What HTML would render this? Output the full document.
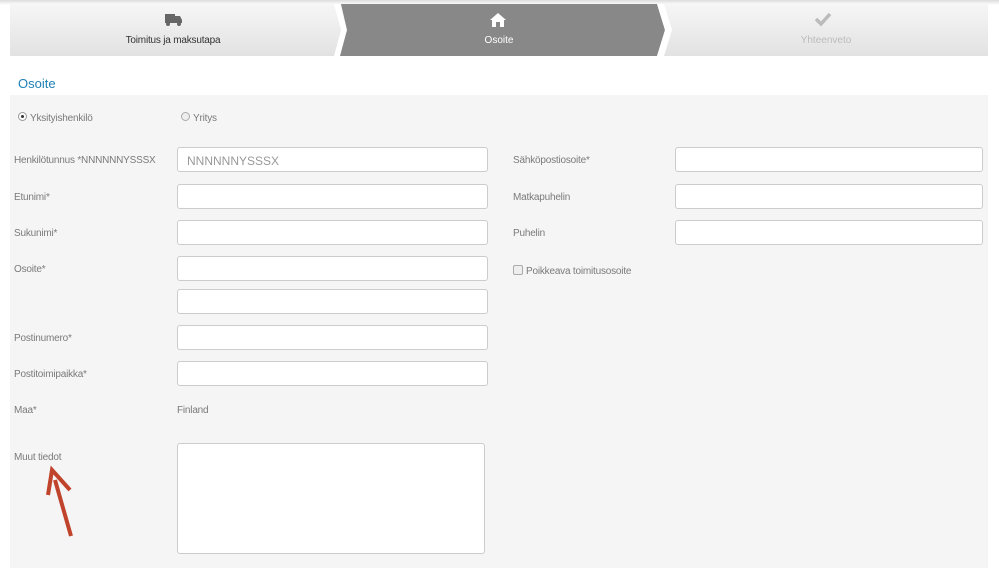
<!DOCTYPE html>
<html><head><meta charset="utf-8"><style>
body{margin:0;width:999px;height:570px;background:#fff;font-family:"Liberation Sans",sans-serif;position:relative;overflow:hidden}
.a{position:absolute}
.lbl{position:absolute;font-size:10px;color:#7a7a7a;letter-spacing:-0.2px}
.in{position:absolute;background:#fff;border:1px solid #ccc;border-radius:3px;box-sizing:border-box;height:25px}
</style></head><body>
<div class="a" style="left:0;top:0;width:999px;height:5px;background:linear-gradient(#ddd,#fff)"></div>
<div class="a" style="left:10px;top:4px;width:978px;height:52px;background:linear-gradient(#f6f6f6,#e2e2e2)"></div>
<svg class="a" style="left:0;top:0" width="999" height="60">
<polygon points="334,4 340,4 347,30 340,56 334,56 341,30" fill="#fff"/>
<polygon points="341,4 657,4 665,30 657,56 340,56 347,30" fill="#888"/>
<polygon points="657,4 664,4 672,30 664,56 657,56 665,30" fill="#fff"/>
<rect x="165" y="14" width="10" height="9" fill="#666"/><polygon points="175,16 180,16 182,20 182,23 175,23" fill="#666"/>
<circle cx="168" cy="24" r="2" fill="#666"/><circle cx="179" cy="24" r="2" fill="#666"/>
<polygon points="498,13 490,20 492,20 492,27 504,27 504,20 506,20" fill="#fff"/>
<rect x="496" y="22" width="4" height="5" fill="#888"/>
<polyline points="816,19 821,24 830,14" fill="none" stroke="#bbb" stroke-width="3.5"/>
</svg>
<div class="a" style="left:10px;top:35px;width:326px;text-align:center;font-size:10px;color:#333;letter-spacing:-0.2px">Toimitus ja maksutapa</div>
<div class="a" style="left:340px;top:35px;width:318px;text-align:center;font-size:10px;color:#fff">Osoite</div>
<div class="a" style="left:664px;top:35px;width:324px;text-align:center;font-size:10px;color:#bbb">Yhteenveto</div>
<div class="a" style="left:18px;top:76px;font-size:13px;color:#1f80b5">Osoite</div>
<div class="a" style="left:10px;top:95px;width:978px;height:473px;background:#f5f5f5"></div>
<div class="a" style="left:18px;top:112px;width:7px;height:7px;border:1px solid #999;border-radius:50%;background:#fff"></div>
<div class="a" style="left:21px;top:115px;width:3px;height:3px;border-radius:50%;background:#333"></div>
<div class="lbl" style="left:30px;top:113px">Yksityishenkilö</div>
<div class="a" style="left:181px;top:112px;width:7px;height:7px;border:1px solid #aaa;border-radius:50%;background:#eee"></div>
<div class="lbl" style="left:193px;top:113px">Yritys</div>
<div class="lbl" style="left:14px;top:155px">Henkilötunnus *NNNNNNYSSSX</div>
<div class="lbl" style="left:14px;top:192px">Etunimi*</div>
<div class="lbl" style="left:14px;top:228px">Sukunimi*</div>
<div class="lbl" style="left:14px;top:264px">Osoite*</div>
<div class="lbl" style="left:14px;top:333px">Postinumero*</div>
<div class="lbl" style="left:14px;top:369px">Postitoimipaikka*</div>
<div class="lbl" style="left:14px;top:405px">Maa*</div>
<div class="lbl" style="left:177px;top:405px">Finland</div>
<div class="lbl" style="left:14px;top:452px">Muut tiedot</div>
<div class="in" style="left:177px;top:147px;width:311px;font-size:12px;color:#999;padding:6px 9px">NNNNNNYSSSX</div>
<div class="in" style="left:177px;top:184px;width:311px"></div>
<div class="in" style="left:177px;top:220px;width:311px"></div>
<div class="in" style="left:177px;top:256px;width:311px"></div>
<div class="in" style="left:177px;top:289px;width:311px"></div>
<div class="in" style="left:177px;top:325px;width:311px"></div>
<div class="in" style="left:177px;top:361px;width:311px"></div>
<div class="in" style="left:177px;top:443px;width:308px;height:111px"></div>
<div class="lbl" style="left:513px;top:155px">Sähköpostiosoite*</div>
<div class="lbl" style="left:513px;top:192px">Matkapuhelin</div>
<div class="lbl" style="left:513px;top:228px">Puhelin</div>
<div class="a" style="left:513px;top:265px;width:8px;height:8px;border:1px solid #aaa;border-radius:2px;background:#eee"></div>
<div class="lbl" style="left:526px;top:266px">Poikkeava toimitusosoite</div>
<div class="in" style="left:675px;top:147px;width:308px"></div>
<div class="in" style="left:675px;top:184px;width:308px"></div>
<div class="in" style="left:675px;top:220px;width:308px"></div>
<svg class="a" style="left:0;top:0" width="999" height="570">
<line x1="71" y1="536" x2="55" y2="480" stroke="#c0432b" stroke-width="4"/>
<polyline points="48,495 52,470 70,490" fill="none" stroke="#c0432b" stroke-width="4"/>
</svg>
</body></html>
